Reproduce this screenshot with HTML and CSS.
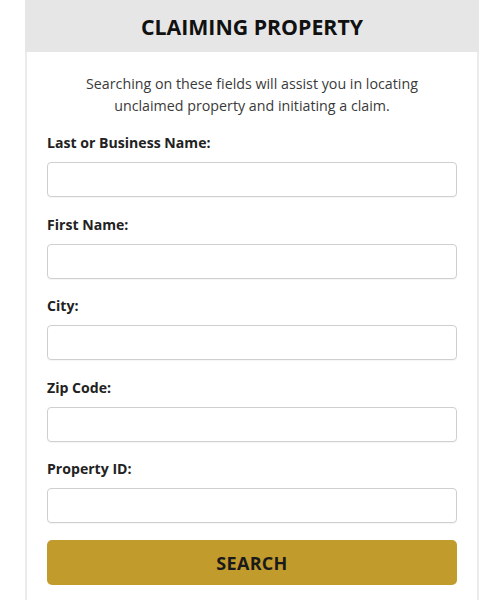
FILE: index.html
```html
<!DOCTYPE html>
<html lang="en">
<head>
<meta charset="utf-8">
<title>Claiming Property</title>
<link rel="stylesheet" href="styles.css">
</head>
<body>
<div class="card">
  <div class="card-header">
    <h1 class="title">CLAIMING PROPERTY</h1>
  </div>
  <form class="card-body">
    <p class="intro">Searching on these fields will assist you in locating<br>unclaimed property and initiating a claim.</p>
    <div class="field">
      <label class="label" for="last">Last or Business Name:</label>
      <input class="input" id="last" type="text">
    </div>
    <div class="field">
      <label class="label" for="first">First Name:</label>
      <input class="input" id="first" type="text">
    </div>
    <div class="field">
      <label class="label" for="city">City:</label>
      <input class="input" id="city" type="text">
    </div>
    <div class="field">
      <label class="label" for="zip">Zip Code:</label>
      <input class="input" id="zip" type="text">
    </div>
    <div class="field">
      <label class="label" for="pid">Property ID:</label>
      <input class="input" id="pid" type="text">
    </div>
    <button class="btn" type="button">SEARCH</button>
  </form>
</div>
</body>
</html>
```
FILE: styles.css
```css
* { box-sizing: border-box; }
html, body { margin: 0; padding: 0; background: #fff; }
body {
  font-family: "Open Sans", "Liberation Sans", sans-serif;
  color: #222;
}
.card {
  margin-left: 25px;
  width: 454px;
  border-left: 2px solid #ebebeb;
  border-right: 2px solid #ebebeb;
  min-height: 600px;
}
.card-header {
  background: #e6e6e6;
  height: 52px;
  display: flex;
  align-items: center;
  justify-content: center;
  margin: 0 -2px;
}
.title {
  margin: 0;
  font-size: 21.3px;
  font-weight: 700;
  color: #111;
  line-height: 1;
  padding-top: 2px;
}
.card-body {
  padding: 21px 20px 0;
  display: flex;
  flex-direction: column;
}
.intro {
  margin: 0 0 16px;
  text-align: center;
  font-size: 14.25px;
  line-height: 22px;
  color: #3a3a3a;
}
.field {
  display: flex;
  flex-direction: column;
  margin-bottom: 17.5px;
}
.label {
  font-size: 14.1px;
  font-weight: 700;
  line-height: 20px;
  color: #222;
  margin-bottom: 9px;
}
.input {
  height: 35px;
  width: 100%;
  border: 1px solid #cfcfcf;
  border-radius: 4px;
  background: #fff;
  box-shadow: 0 1px 1px rgba(0,0,0,0.04);
  font: inherit;
}
.btn {
  margin-top: -0.5px;
  height: 45px;
  width: 100%;
  border: none;
  border-radius: 5px;
  background: #c29b2d;
  color: #1a1a1a;
  font-family: "Open Sans", "Liberation Sans", sans-serif;
  font-size: 18px;
  font-weight: 700;
  letter-spacing: 0.3px;
}
```
